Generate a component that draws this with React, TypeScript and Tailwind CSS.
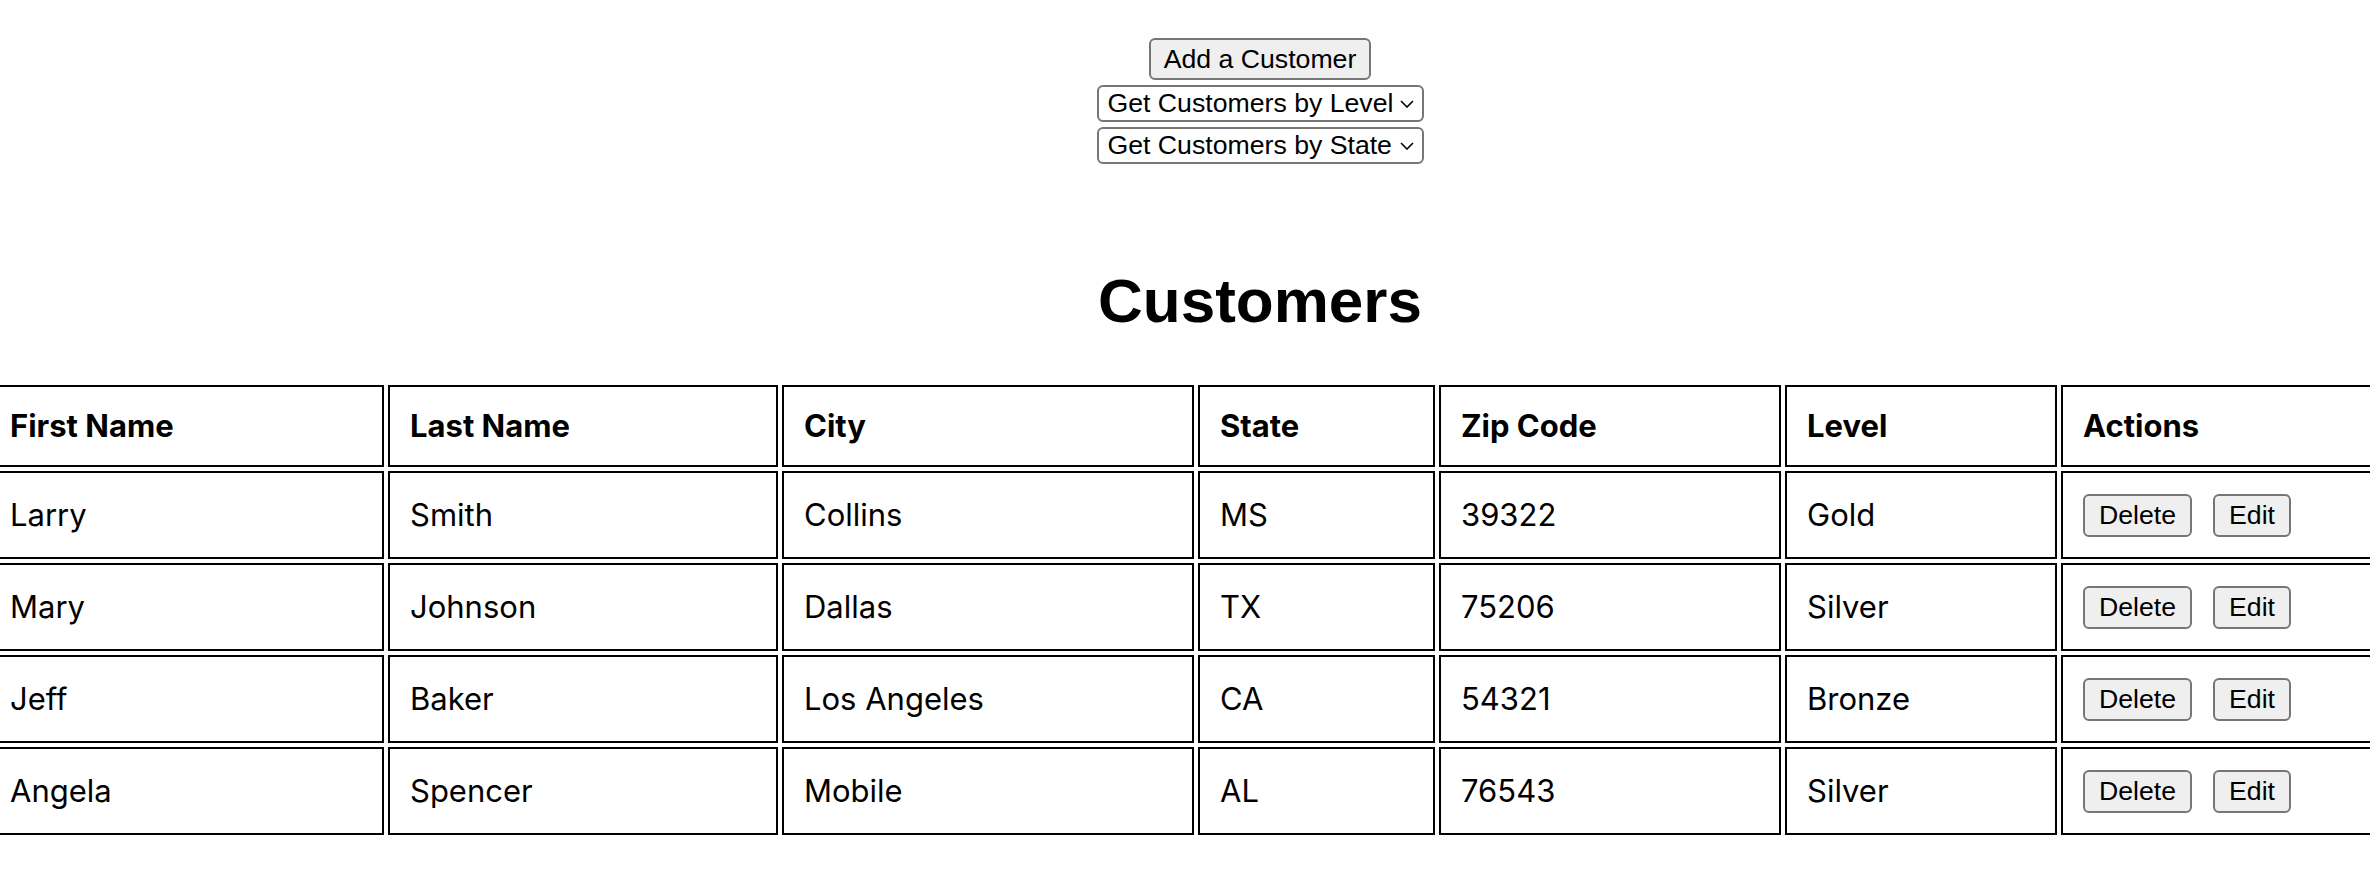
import React from "react";

interface Customer {
  first: string;
  last: string;
  city: string;
  state: string;
  zip: string;
  level: string;
}

const customers: Customer[] = [
  { first: "Larry", last: "Smith", city: "Collins", state: "MS", zip: "39322", level: "Gold" },
  { first: "Mary", last: "Johnson", city: "Dallas", state: "TX", zip: "75206", level: "Silver" },
  { first: "Jeff", last: "Baker", city: "Los Angeles", state: "CA", zip: "54321", level: "Bronze" },
  { first: "Angela", last: "Spencer", city: "Mobile", state: "AL", zip: "76543", level: "Silver" },
];

// widths include border + padding (border-box)
const columns = [
  { label: "First Name", width: "w-[396px]" },
  { label: "Last Name", width: "w-[390px]" },
  { label: "City", width: "w-[412px]" },
  { label: "State", width: "w-[237px]" },
  { label: "Zip Code", width: "w-[342px]" },
  { label: "Level", width: "w-[272px]" },
  { label: "Actions", width: "w-[471px]" },
];

const btn =
  "border-2 border-[#767676] rounded-[6px] bg-[#efefef] text-black text-[26.67px] leading-none font-['Liberation_Sans',Arial,sans-serif]";

function Chevron() {
  return (
    <svg
      width="14"
      height="8"
      viewBox="0 0 14 8"
      fill="none"
      className="pointer-events-none absolute right-[10px] top-1/2 -translate-y-1/2"
    >
      <path d="M1 1l6 6 6-6" stroke="#000" strokeWidth="1.6" />
    </svg>
  );
}

function FilterSelect({ label }: { label: string }) {
  return (
    <div className="relative">
      <select
        defaultValue=""
        className="appearance-none w-[327px] h-[37px] pl-[9px] pr-[22px] border-2 border-[#767676] rounded-[6px] bg-white text-black text-[26.67px] leading-none font-['Liberation_Sans',Arial,sans-serif]"
      >
        <option value="">{label}</option>
      </select>
      <Chevron />
    </div>
  );
}

export default function App() {
  return (
    <div className="w-full min-h-screen overflow-hidden bg-white text-black">
      <div className="w-[2520px] flex flex-col items-center pt-[38px]">
        {/* controls */}
        <div className="flex flex-col items-center gap-[5px]">
          <button className={`${btn} h-[42px] px-[13px]`}>Add a Customer</button>
          <FilterSelect label="Get Customers by Level" />
          <FilterSelect label="Get Customers by State" />
        </div>

        <h1 className="mt-[106px] text-[62px] leading-none font-bold font-['Liberation_Sans',Arial,sans-serif]">
          Customers
        </h1>

        <table className="mt-[49px] w-[2552px] table-fixed border-separate border-spacing-1 text-[31px] font-['Inter',sans-serif]">
          <thead>
            <tr className="h-[82px]">
              {columns.map((c) => (
                <th
                  key={c.label}
                  className={`${c.width} border-2 border-black px-5 text-left align-middle font-bold`}
                >
                  {c.label}
                </th>
              ))}
            </tr>
          </thead>
          <tbody>
            {customers.map((c) => (
              <tr key={c.first} className="h-[88px]">
                <td className="border-2 border-black px-5 align-middle">{c.first}</td>
                <td className="border-2 border-black px-5 align-middle">{c.last}</td>
                <td className="border-2 border-black px-5 align-middle">{c.city}</td>
                <td className="border-2 border-black px-5 align-middle">{c.state}</td>
                <td className="border-2 border-black px-5 align-middle">{c.zip}</td>
                <td className="border-2 border-black px-5 align-middle">{c.level}</td>
                <td className="border-2 border-black px-5 align-middle">
                  <div className="flex items-center gap-[21px]">
                    <button className={`${btn} h-[43px] px-[14px]`}>Delete</button>
                    <button className={`${btn} h-[43px] px-[14px]`}>Edit</button>
                  </div>
                </td>
              </tr>
            ))}
          </tbody>
        </table>
      </div>
    </div>
  );
}
